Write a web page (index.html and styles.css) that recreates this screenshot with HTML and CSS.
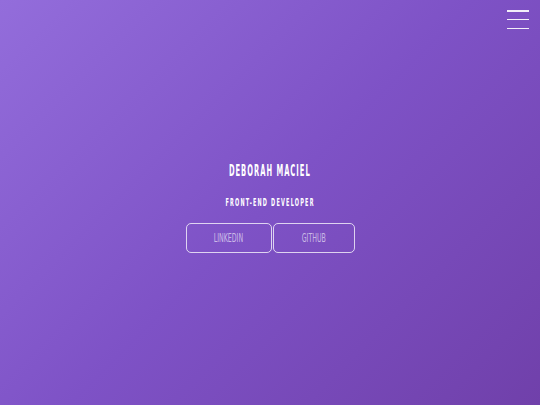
FILE: index.html
```html
<!DOCTYPE html>
<html lang="en">
<head>
    <meta charset="UTF-8">
    <meta name="viewport" content="width=device-width, initial-scale=1.0">
    <title>Deborah Maciel</title>
    <link rel="stylesheet" href="styles.css">
</head>
<body>
    <button class="menu-toggle" aria-label="Menu">
        <span></span>
        <span></span>
        <span></span>
    </button>
    <main class="intro">
        <h1 class="name">Deborah Maciel</h1>
        <h2 class="role">Front-end Developer</h2>
        <div class="links">
            <a href="#" class="link-button"><span>Linkedin</span></a>
            <a href="#" class="link-button"><span>Github</span></a>
        </div>
    </main>
</body>
</html>
```

FILE: styles.css
```css
html, body {
    height: 100%;
}
body {
    margin: 0;
    font-family: "DejaVu Sans Condensed", "DejaVu Sans", sans-serif;
    font-stretch: condensed;
    color: white;
    background: linear-gradient(135deg, #936ddb 0%, #7e52c6 50%, #7040aa 100%);
    overflow: hidden;
}
.menu-toggle {
    position: absolute;
    top: 10px;
    right: 11px;
    width: 22px;
    height: 19px;
    padding: 0;
    border: none;
    background: transparent;
    display: flex;
    flex-direction: column;
    justify-content: space-between;
    cursor: pointer;
}
.menu-toggle span {
    display: block;
    height: 1.5px;
    background: rgba(255, 255, 255, 0.9);
}
.intro {
    height: 100%;
    display: flex;
    flex-direction: column;
    align-items: center;
    justify-content: center;
    padding-top: 10px;
    box-sizing: border-box;
}
.name {
    margin: 0 0 1px;
    font-size: 15px;
    font-weight: 600;
    text-transform: uppercase;
    letter-spacing: 2px;
    transform: scaleX(0.5);
}
.role {
    margin: 16px 0 0;
    font-size: 10px;
    font-weight: 600;
    text-transform: uppercase;
    letter-spacing: 2.2px;
    transform: scaleX(0.55);
}
.links {
    display: flex;
    gap: 1px;
    margin-top: 15px;
}
.link-button {
    width: 84px;
    height: 28px;
    display: flex;
    align-items: center;
    justify-content: center;
    border: 1px solid rgba(255, 255, 255, 0.75);
    border-radius: 5px;
    color: rgba(255, 255, 255, 0.6);
    font-size: 12px;
    text-transform: uppercase;
    text-decoration: none;
}
.link-button span {
    transform: scaleX(0.58);
}
.link-button:last-child {
    width: 80px;
}
```
